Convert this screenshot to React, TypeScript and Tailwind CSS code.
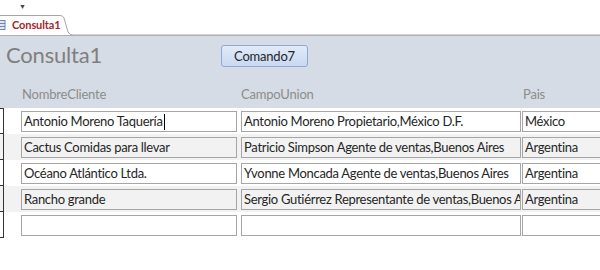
const rows = [
  { name: "Antonio Moreno Taquería", union: "Antonio Moreno Propietario,México D.F.", pais: "México", cursor: true },
  { name: "Cactus Comidas para llevar", union: "Patricio Simpson Agente de ventas,Buenos Aires", pais: "Argentina" },
  { name: "Océano Atlántico Ltda.", union: "Yvonne Moncada Agente de ventas,Buenos Aires", pais: "Argentina" },
  { name: "Rancho grande", union: "Sergio Gutiérrez Representante de ventas,Buenos Aires", pais: "Argentina" },
  { name: "", union: "", pais: "" },
];

function Field({ value, width, cursor }: { value: string; width: string; cursor?: boolean }) {
  return (
    <div
      className={`${width} h-[21px] shrink-0 border border-[#a6a6a6] pl-[2px] text-[13px] tracking-[-0.3px] leading-[19px] text-[#262626] whitespace-nowrap overflow-hidden flex items-center`}
    >
      {value}
      {cursor && <span className="inline-block w-px h-[16px] bg-black ml-px" />}
    </div>
  );
}

export default function App() {
  return (
    <div className="w-[600px] h-[270px] bg-white overflow-hidden font-['Lato','Liberation_Sans',sans-serif]">
      {/* quick access strip */}
      <div className="h-[15px] relative">
        <span className="absolute left-[19px] top-[1px] text-[7px] text-[#444]">▼</span>
      </div>

      {/* tab row */}
      <div className="h-[21px] relative">
        <svg className="absolute inset-0" width="600" height="21" viewBox="0 0 600 21">
          <path d="M0 0.5 H60 Q63 0.5 64 3 L68 17 Q69.5 20 73 20 H600" fill="white" stroke="#a6a6a6" strokeWidth="1" />
          <line x1="0" y1="20.5" x2="600" y2="20.5" stroke="#b0b0b0" />
        </svg>
        <div className="relative flex items-center h-[20px] gap-[6px]">
          <svg width="6" height="10" viewBox="0 0 6 10">
            <rect x="-4" y="0.5" width="9" height="9" fill="#dfe8f3" stroke="#6d87aa" />
            <line x1="-4" y1="3.5" x2="5" y2="3.5" stroke="#6d87aa" />
            <line x1="-4" y1="6.5" x2="5" y2="6.5" stroke="#6d87aa" />
          </svg>
          <span className="text-[11px] font-bold text-[#a4262c] tracking-[-0.1px]">Consulta1</span>
        </div>
      </div>

      {/* form header */}
      <div className="h-[72px] bg-[#d6dce5] relative">
        <div className="flex items-start">
          <div className="pl-[6px] pt-[5px] w-[221px] text-[22px] tracking-[-0.2px] leading-[28px] text-[#7f7f7f]">Consulta1</div>
          <button className="mt-[9px] w-[87px] h-[22px] rounded-[3px] border border-[#8ea9d8] bg-gradient-to-b from-[#e1eaf8] to-[#c9d9f2] text-[13px] tracking-[-0.2px] text-[#262626] leading-[20px]">
            Comando7
          </button>
        </div>
        <div className="absolute left-0 top-[49px] flex text-[13px] tracking-[-0.2px] text-[#8c8c8c]">
          <span className="pl-[22px] w-[241px]">NombreCliente</span>
          <span className="w-[282px]">CampoUnion</span>
          <span>Pais</span>
        </div>
      </div>

      {/* detail rows */}
      <div>
        {rows.map((r, i) => (
          <div key={i} className={`h-[26px] flex ${i % 2 === 1 ? "bg-[#f2f2f2]" : "bg-white"}`}>
            <div className={`w-[4px] h-[26px] shrink-0 border-r border-b border-[#333] ${i === 0 ? "border-t" : ""}`} />
            <div className="flex pt-[3px] pl-[17px]">
              <Field value={r.name} width="w-[216px]" cursor={r.cursor} />
              <div className="w-[4px] shrink-0" />
              <Field value={r.union} width="w-[280px]" />
              <div className="w-[1px] shrink-0" />
              <Field value={r.pais} width="w-[100px]" />
            </div>
          </div>
        ))}
      </div>
    </div>
  );
}
